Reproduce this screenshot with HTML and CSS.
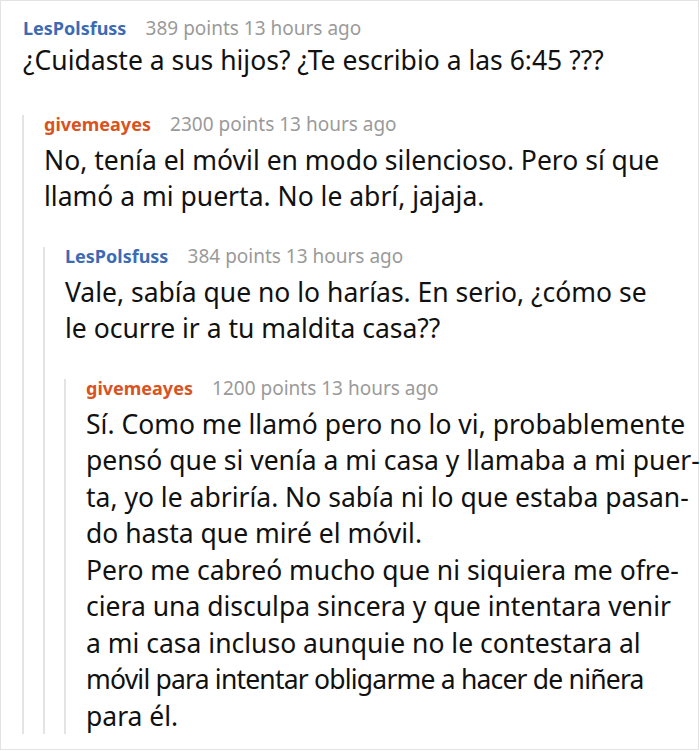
FILE: index.html
```html
<!DOCTYPE html>
<html lang="es">
<head>
    <meta charset="UTF-8">
    <meta name="viewport" content="width=device-width, initial-scale=1.0">
    <title>Comentarios</title>
    <link rel="stylesheet" href="styles.css">
</head>
<body>

    <div class="thread">
        <div class="comment">
            <div class="comment-head">
                <span class="author blue">LesPolsfuss</span>
                <span class="meta">389 points 13 hours ago</span>
            </div>
            <p class="comment-body">¿Cuidaste a sus hijos? ¿Te escribio a las 6:45 ???</p>

            <!-- replies -->
            <div class="replies">
                <div class="comment">
                    <div class="comment-head">
                        <span class="author orange">givemeayes</span>
                        <span class="meta">2300 points 13 hours ago</span>
                    </div>
                    <p class="comment-body">No, tenía el móvil en modo silencioso. Pero sí que llamó a mi puerta. No le abrí, jajaja.</p>

                    <div class="replies">
                        <div class="comment">
                            <div class="comment-head">
                                <span class="author blue">LesPolsfuss</span>
                                <span class="meta">384 points 13 hours ago</span>
                            </div>
                            <p class="comment-body">Vale, sabía que no lo harías. En serio, ¿cómo se<br>le ocurre ir a tu maldita casa??</p>

                            <div class="replies">
                                <div class="comment">
                                    <div class="comment-head">
                                        <span class="author orange">givemeayes</span>
                                        <span class="meta">1200 points 13 hours ago</span>
                                    </div>
                                    <p class="comment-body no-wrap">Sí. Como me llamó pero no lo vi, probablemente<br>
                                    pensó que si venía a mi casa y llamaba a mi puer-<br>
                                    ta, yo le abriría. No sabía ni lo que estaba pasan-<br>
                                    do hasta que miré el móvil.<br>
                                    Pero me cabreó mucho que ni siquiera me ofre-<br>
                                    ciera una disculpa sincera y que intentara venir<br>
                                    a mi casa incluso aunquie no le contestara al<br>
                                    <span class="tight">móvil para intentar obligarme a hacer de niñera</span><br>
                                    para él.</p>
                                </div>
                            </div>
                        </div>
                    </div>
                </div>
            </div>
        </div>
    </div>

</body>
</html>
```

FILE: styles.css
```css
body {
    margin: 0;
    padding: 0;
    background-color: #ffffff;
    font-family: "Noto Sans", "Open Sans", sans-serif;
    color: #111111;
}

.thread {
    box-sizing: border-box;
    width: 699px;
    height: 750px;
    border: 1px solid #e3e3e3;
    padding: 18px 4px 17px 22px;
}

.comment-head {
    line-height: 18px;
    white-space: nowrap;
}

.author {
    font-size: 18px;
    font-weight: bold;
    margin-right: 15px;
}

.blue {
    color: #3c6bb4;
}

.orange {
    color: #d9531f;
}

.meta {
    font-size: 19px;
    color: #9a9a9a;
}

.comment-body {
    max-width: 616px;
    margin: 8px 0 0 0;
    font-size: 26.5px;
    line-height: 36.5px;
}

.no-wrap {
    white-space: nowrap;
}

/* the first comment sits a little tighter under its header */
.thread > .comment > .comment-body {
    margin-top: 4px;
}

.thread > .comment > .replies {
    margin-top: 36px;
}

.replies {
    margin-top: 32px;
    margin-left: -1px;
    border-left: 2px solid #e4e4e4;
    padding-left: 20px;
}

.tight {
    letter-spacing: -0.8px;
}
```
